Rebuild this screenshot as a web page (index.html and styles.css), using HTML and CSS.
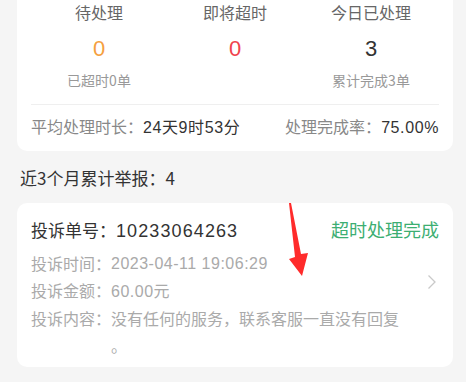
FILE: index.html
```html
<!DOCTYPE html>
<html lang="zh-CN">
<head>
    <meta charset="UTF-8">
    <meta name="viewport" content="width=device-width, initial-scale=1.0">
    <title>投诉处理</title>
    <link rel="stylesheet" href="styles.css">
</head>
<body>
    <div class="summary">
        <div class="counts">
            <div class="count">
                <div class="count-label">待处理</div>
                <div class="count-num orange">0</div>
                <div class="count-sub">已超时0单</div>
            </div>
            <div class="count">
                <div class="count-label">即将超时</div>
                <div class="count-num red">0</div>
            </div>
            <div class="count">
                <div class="count-label">今日已处理</div>
                <div class="count-num">3</div>
                <div class="count-sub">累计完成3单</div>
            </div>
        </div>
        <div class="stats">
            <div><span class="stat-label">平均处理时长：</span><span class="stat-value">24天9时53分</span></div>
            <div><span class="stat-label">处理完成率：</span><span class="stat-value">75.00%</span></div>
        </div>
    </div>

    <div class="section-title">近3个月累计举报：4</div>

    <div class="complaint">
        <div class="complaint-head">
            <span><span class="head-label">投诉单号：</span><span class="num">10233064263</span></span>
            <span class="status">超时处理完成</span>
        </div>
        <div class="row">
            <span class="row-label">投诉时间：</span>
            <span class="row-value num">2023-04-11 19:06:29</span>
        </div>
        <div class="row">
            <span class="row-label">投诉金额：</span>
            <span class="row-value"><span class="num">60.00</span>元</span>
        </div>
        <div class="row">
            <span class="row-label">投诉内容：</span>
            <span class="row-value">没有任何的服务，联系客服一直没有回复。</span>
        </div>
        <svg class="chevron" width="10" height="16" viewBox="0 0 10 16">
            <polyline points="1.5,1.5 8,8 1.5,14.5" fill="none" stroke="#c9c9c9" stroke-width="1.3"/>
        </svg>
        <!-- annotation arrow from the screenshot -->
        <svg class="mark" width="30" height="80" viewBox="0 0 30 80">
            <polygon points="1,0 3,0 13,51 20,50 14,73 1,56 7,54" fill="#ff2b2b"/>
        </svg>
    </div>
</body>
</html>
```

FILE: styles.css
```css
* {
    box-sizing: border-box;
    margin: 0;
    padding: 0;
}

body {
    font-family: "Noto Sans CJK SC", "Noto Sans", sans-serif;
    background-color: #f5f5f5;
    color: #333;
    width: 466px;
    height: 382px;
    overflow: hidden;
}

.num {
    font-family: "Liberation Sans", "Noto Sans CJK SC", sans-serif;
    letter-spacing: 0.5px;
}

.summary {
    margin: -12px 13px 0 17px;
    padding: 12px 14px 0;
    background: #fff;
    border-radius: 10px;
}

.counts {
    display: grid;
    grid-template-columns: repeat(3, 1fr);
    padding-bottom: 13px;
    border-bottom: 1px solid #efefef;
}

.count {
    display: flex;
    flex-direction: column;
    align-items: center;
}

.count-label {
    font-size: 16px;
    line-height: 24px;
    color: #666;
}

.count-num {
    margin-top: 11px;
    font-family: "Liberation Sans", sans-serif;
    font-size: 22px;
    line-height: 28px;
    color: #333;
}

.count-num.orange {
    color: #f5a03f;
}

.count-num.red {
    color: #f0434d;
}

.count-sub {
    margin-top: 7px;
    font-size: 14px;
    line-height: 20px;
    color: #999;
}

.count:nth-child(2) {
    padding-bottom: 28px;
}

.stats {
    display: flex;
    justify-content: space-between;
    padding: 9px 0 11px;
    font-size: 16px;
    line-height: 24px;
}

.stat-label {
    color: #888;
}

.stat-value {
    color: #333;
    font-family: "Liberation Sans", "Noto Sans CJK SC", sans-serif;
    letter-spacing: 0.6px;
}

.section-title {
    padding: 15px 20px 13px;
    font-size: 17px;
    line-height: 24px;
    color: #333;
}

.complaint {
    position: relative;
    margin: 0 13px 0 17px;
    padding: 13px 14px 8px;
    background: #fff;
    border-radius: 10px;
}

.complaint-head {
    display: flex;
    justify-content: space-between;
    align-items: baseline;
    font-size: 18px;
    line-height: 26px;
    color: #333;
    margin-bottom: 6px;
}

.head-label {
    font-size: 17px;
}

.complaint-head .num {
    letter-spacing: 1.1px;
}

.status {
    color: #3cae72;
}

.row {
    display: flex;
    padding-right: 30px;
    font-size: 16px;
    line-height: 27px;
    color: #aaa;
}

.row-label {
    flex-shrink: 0;
}

.row-value {
    line-break: anywhere;
}

.chevron {
    position: absolute;
    right: 16px;
    top: 71px;
}

.mark {
    position: absolute;
    left: 271px;
    top: 0;
}
```
